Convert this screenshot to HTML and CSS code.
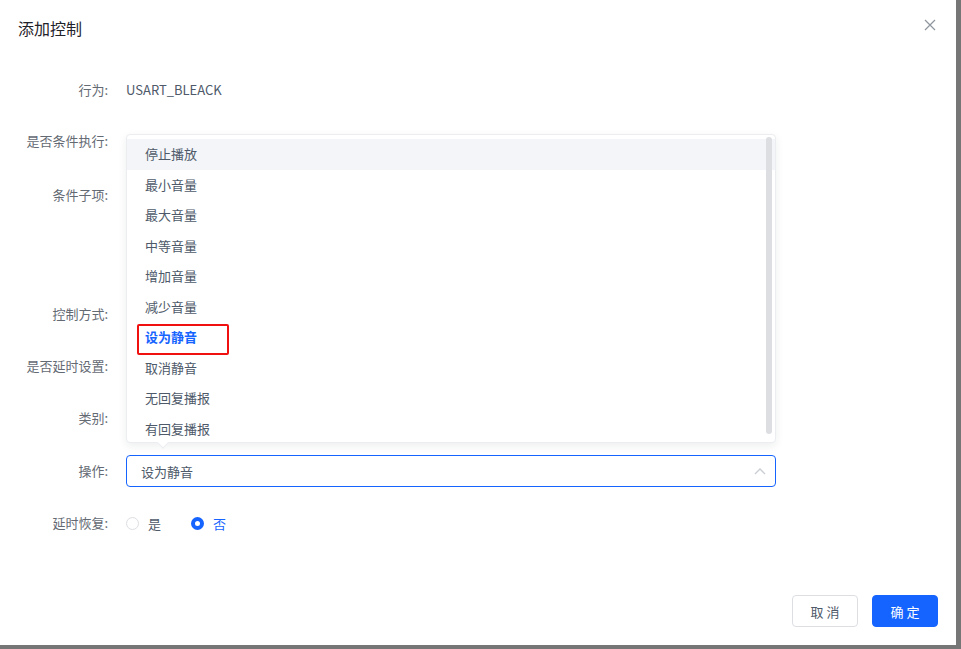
FILE: index.html
```html
<!DOCTYPE html>
<html lang="zh">
<head>
<meta charset="utf-8">
<link rel="stylesheet" href="styles.css">
</head>
<body>
<div class="dialog">
  <div class="header">
    <span class="title">添加控制</span>
    <svg class="close" width="12" height="12" viewBox="0 0 12 12"><path d="M1 1L11 11M11 1L1 11" stroke="#8f959e" stroke-width="1.2" fill="none"/></svg>
  </div>
  <div class="form">
    <div class="row r1"><label>行为:</label><div class="val">USART_BLEACK</div></div>
    <div class="row r2"><label>是否条件执行:</label><div class="val"></div></div>
    <div class="row r3"><label>条件子项:</label><div class="val"></div></div>
    <div class="row"><label>控制方式:</label><div class="val"></div></div>
    <div class="row"><label>是否延时设置:</label><div class="val"></div></div>
    <div class="row r6"><label>类别:</label><div class="val"></div></div>
    <div class="row"><label>操作:</label>
      <div class="select"><span>设为静音</span>
        <svg width="12" height="8" viewBox="0 0 12 8"><path d="M1 7L6 2L11 7" stroke="#c9cdd4" stroke-width="1.3" fill="none"/></svg>
      </div>
    </div>
    <div class="row"><label>延时恢复:</label>
      <div class="radios">
        <span class="radio"><i class="dot"></i>是</span>
        <span class="radio on"><i class="dot"></i>否</span>
      </div>
    </div>
  </div>
  <div class="footer">
    <button class="btn">取 消</button>
    <button class="btn primary">确 定</button>
  </div>

  <div class="popup">
    <ul class="list">
      <li class="hover">停止播放</li>
      <li>最小音量</li>
      <li>最大音量</li>
      <li>中等音量</li>
      <li>增加音量</li>
      <li>减少音量</li>
      <li class="sel">设为静音</li>
      <li>取消静音</li>
      <li>无回复播报</li>
      <li>有回复播报</li>
    </ul>
    <div class="scrollbar"></div>
    <div class="mark"></div>
    <div class="arrow"></div>
  </div>
</div>
</body>
</html>
```
FILE: styles.css
```css
* { box-sizing: border-box; }
html, body { margin: 0; padding: 0; }
body {
  background: #767676;
  font-family: "Noto Sans CJK SC", "Noto Sans", sans-serif;
  width: 961px;
  height: 649px;
  overflow: hidden;
}
.dialog {
  position: relative;
  width: 956px;
  height: 645px;
  background: #fff;
}
.header {
  height: 56px;
  padding: 16px 19px 0 18px;
  display: flex;
  justify-content: space-between;
  align-items: flex-start;
}
.title {
  font-size: 16px;
  line-height: 24px;
  color: #1f2329;
}
.close { margin-top: 3px; margin-right: 1px; }
.form {
  padding-top: 18px;
}
.row {
  display: flex;
  align-items: flex-start;
  height: 32px;
  margin-bottom: 20px;
}
.row.r1 { height: 31px; }
.row.r2 { height: 34px; }
.row.r3 { height: 99px; }
.row.r6 { height: 33px; }
.row label {
  width: 110px;
  text-align: right;
  padding-right: 2px;
  font-size: 13px;
  line-height: 32px;
  color: #646a73;
  flex: none;
}
.val {
  margin-left: 16px;
  font-size: 13px;
  line-height: 32px;
  color: #4e5969;
}
.select {
  margin-left: 16px;
  width: 650px;
  height: 32px;
  border: 1px solid #1664ff;
  border-radius: 4px;
  display: flex;
  align-items: center;
  justify-content: space-between;
  padding: 0 9px 0 14px;
  font-size: 13px;
  color: #4e5969;
}
.radios {
  margin-left: 16px;
  display: flex;
  gap: 30px;
  height: 32px;
  align-items: center;
  font-size: 13px;
  color: #4e5969;
}
.radio { display: flex; align-items: center; gap: 9px; }
.dot {
  width: 13px; height: 13px;
  border-radius: 50%;
  border: 1px solid #dcdee2;
  display: inline-block;
}
.radio.on { color: #1664ff; }
.radio.on .dot {
  border: 4px solid #1664ff;
  background: #fff;
}
.footer {
  position: absolute;
  right: 18px;
  bottom: 18px;
  display: flex;
  gap: 14px;
}
.btn {
  width: 66px;
  height: 32px;
  border: 1px solid #dcdee2;
  border-radius: 4px;
  background: #fff;
  color: #4e5969;
  font-family: inherit;
  font-size: 13px;
  padding: 0;
}
.btn.primary {
  background: #1664ff;
  border-color: #1664ff;
  color: #fff;
}
.popup {
  position: absolute;
  left: 126px;
  top: 134px;
  width: 650px;
  height: 309px;
  background: #fff;
  border: 1px solid #ebedf0;
  border-radius: 4px;
  box-shadow: 0 3px 8px rgba(31, 35, 41, 0.08);
}
.list {
  list-style: none;
  margin: 0;
  padding: 4px 0 0;
  height: 100%;
  overflow: hidden;
}
.list li {
  height: 30.5px;
  line-height: 30.5px;
  padding-left: 18px;
  font-size: 13px;
  color: #4e5969;
}
.list li.hover { background: #f4f5f8; }
.list li.sel { color: #1664ff; font-weight: 700; }
.scrollbar {
  position: absolute;
  right: 3px;
  top: 2px;
  width: 6px;
  height: 297px;
  border-radius: 3px;
  background: #dcdee2;
}
.mark {
  position: absolute;
  left: 10px;
  top: 189px;
  width: 92px;
  height: 31px;
  border: 2px solid #f01010;
  border-radius: 2px;
}
.arrow {
  position: absolute;
  left: 32px;
  bottom: -5px;
  width: 8px;
  height: 8px;
  background: #fff;
  transform: rotate(45deg);
  border-right: 1px solid #ebedf0;
  border-bottom: 1px solid #ebedf0;
}
```
